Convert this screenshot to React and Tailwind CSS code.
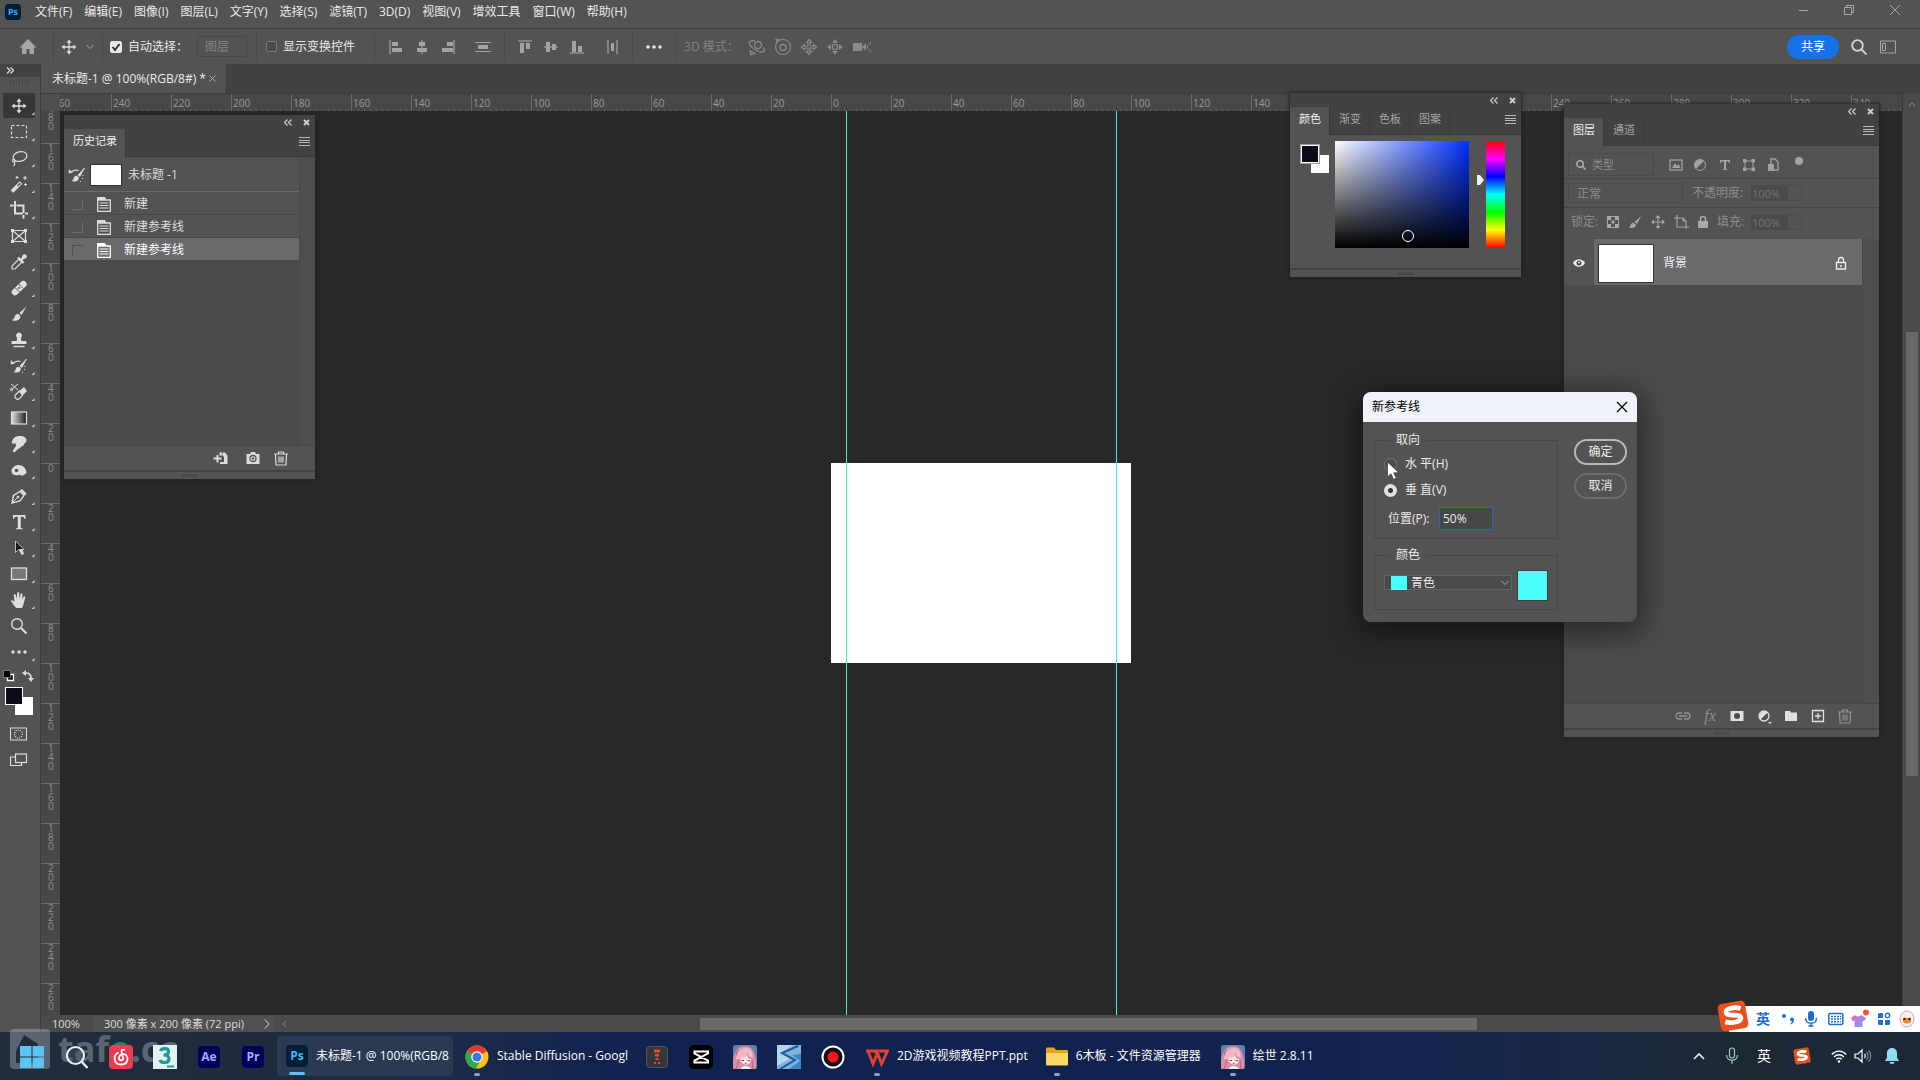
import React, { useState } from 'react';

const MENUS = ['文件(F)', '编辑(E)', '图像(I)', '图层(L)', '文字(Y)', '选择(S)', '滤镜(T)', '3D(D)', '视图(V)', '增效工具', '窗口(W)', '帮助(H)'];

const HISTORY = ['新建', '新建参考线', '新建参考线'];

// ruler cells run outwards from the middle of the document
const H_CELLS = Array.from({ length: 31 }, (_, i) => Math.abs((i - 13) * 20));
const V_CELLS = Array.from({ length: 23 }, (_, i) => Math.abs((i - 9) * 20));

function Svg({ w = 18, h = 18, className = '', children }) {
    return (
        <svg
            width={w}
            height={h}
            viewBox={`0 0 ${w} ${h}`}
            fill="none"
            stroke="none"
            className={`shrink-0 ${className}`}
            aria-hidden="true"
        >
            {children}
        </svg>
    );
}

const moveShape = (
    <>
        <path d="M9 4v10M4 9h10" stroke="currentColor" strokeWidth="1.3" />
        <path d="M9 1.5l2.6 3.2H6.4zM9 16.5l2.6-3.2H6.4zM1.5 9l3.2-2.6v5.2zM16.5 9l-3.2-2.6v5.2z" fill="currentColor" />
    </>
);

const brushShape = (
    <>
        <path d="M16.5 1.5L9.5 8l2 2 5-8.5z" fill="currentColor" />
        <path d="M9 9.2c-2-.8-3.8.2-4.3 2.2-.4 1.7-1.2 3-3 3.6 3.3 1.7 8.3 1 8.8-3.2z" fill="currentColor" />
    </>
);

const historyBrushShape = (
    <>
        <path d="M16.5 2L10 9l1.7 1.5L16.5 2z" fill="currentColor" stroke="currentColor" strokeWidth=".8" />
        <path d="M9.5 10c-2-.6-3.5.4-3.8 2.2-.2 1.2-1 2.3-2 2.8 3 1.2 6.8.4 7.3-3z" fill="currentColor" />
        <path d="M3 6.5c2-2.5 4.5-3 7.5-2" stroke="currentColor" strokeWidth="1.2" />
        <path d="M.8 7.5V3l4 3.5z" fill="currentColor" />
        <path d="M15 9v1M14.5 12v1M12.5 15v1" stroke="currentColor" />
    </>
);

const trashShape = (
    <path d="M2 5h14M6.5 5V3h5v2M3.5 5l.5 11h10l.5-11M7 7.5v6M9 7.5v6M11 7.5v6" stroke="currentColor" strokeWidth="1.2" />
);

const TOOLS = [
    { name: '移动工具', shape: moveShape, active: true },
    { name: '矩形选框工具', shape: <rect x="1.5" y="2.5" width="15" height="12" stroke="currentColor" strokeWidth="1.2" strokeDasharray="3 2" /> },
    {
        name: '套索工具',
        shape: (
            <>
                <ellipse cx="10" cy="7.5" rx="7" ry="4.8" transform="rotate(-14 10 7.5)" stroke="currentColor" strokeWidth="1.3" />
                <path d="M3.5 10c-1.5 1-1 3 .5 3s1.5-2 0-2.5M4 13c1 1.5 1 3-.5 4" stroke="currentColor" strokeWidth="1.2" />
            </>
        )
    },
    {
        name: '魔棒工具',
        shape: (
            <>
                <path d="M2 16.5l9-9" stroke="currentColor" strokeWidth="3.8" />
                <path d="M7.5 11l2.8-2.8" stroke="#535353" strokeWidth="1.4" />
                <path d="M7 1v3M5.5 2.500h3M15 1v4M13 3h4M15.5 8v3M14 9.5h3" stroke="currentColor" />
            </>
        )
    },
    { name: '裁剪工具', shape: <path d="M5 0v12.5h8M0 4.5h3.5M6.5 4.5h7V12M13.5 14v3.5M15 12.5h3" stroke="currentColor" strokeWidth="2" /> },
    {
        name: '图框工具',
        shape: (
            <>
                <path d="M2.5 3.5h13v11h-13zM2.5 3.5l13 11M15.5 3.5l-13 11" stroke="currentColor" strokeWidth="1.2" />
                <path d="M1 2h3v3H1zM14 2h3v3h-3zM1 13h3v3H1zM14 13h3v3h-3z" fill="currentColor" />
            </>
        )
    },
    {
        name: '吸管工具',
        shape: (
            <>
                <path d="M9 6l3 3-7 7H2v-3z" stroke="currentColor" strokeWidth="1.2" />
                <path d="M8 4.5l5.5 5.5M11 7l3.8-3.8" stroke="currentColor" strokeWidth="2.4" />
                <circle cx="14.5" cy="3.5" r="2.3" fill="currentColor" />
            </>
        )
    },
    {
        name: '污点修复画笔工具',
        shape: (
            <>
                <rect x="0" y="6" width="18" height="6.5" rx="3.2" transform="rotate(-43 9 9)" fill="currentColor" />
                <path d="M5 8.5l4.5 4.5M8.5 5l4.5 4.5" stroke="#535353" />
                <circle cx="9" cy="9" r="1" fill="#535353" />
            </>
        )
    },
    { name: '画笔工具', shape: brushShape },
    {
        name: '仿制图章工具',
        shape: (
            <>
                <path d="M9 1.5a3 3 0 0 1 2.5 4.5c-.8 1.2-.8 2.500 0 4H15c1 0 1.5.6 1.5 1.5V13h-15v-1.5c0-.9.5-1.5 1.5-1.5h3.5c.8-1.5.8-2.8 0-4A3 3 0 0 1 9 1.5z" fill="currentColor" />
                <path d="M3.5 15.500h11" stroke="currentColor" strokeWidth="1.5" />
            </>
        )
    },
    { name: '历史记录画笔工具', shape: historyBrushShape },
    {
        name: '橡皮擦工具',
        shape: (
            <>
                <path d="M9.5 8l4.5-4 3 4-4.500 4.500z" fill="currentColor" />
                <path d="M9.5 8l3 4.5-3 3c-1 .9-2.500.9-3.500 0-1.300-1-1.300-2.800-.4-3.800z" stroke="currentColor" strokeWidth="1.2" />
                <path d="M1 1l7 6M8 1L1.5 6.5" stroke="currentColor" />
                <circle cx="1.5" cy="6.5" r="1.3" stroke="currentColor" />
            </>
        )
    },
    {
        name: '渐变工具',
        shape: (
            <>
                <defs>
                    <linearGradient id="toolGradient">
                        <stop offset="0" stopColor="#e0e0e0" />
                        <stop offset="1" stopColor="#1c1c1c" />
                    </linearGradient>
                </defs>
                <rect x="1.5" y="3" width="15" height="12" fill="url(#toolGradient)" stroke="currentColor" strokeWidth="1.2" />
            </>
        )
    },
    { name: '涂抹工具', shape: <path d="M4 3c3-2.5 8-2.5 11-.5 2.5 1.7 1.5 5-.5 6l-1.500 2.500-2 .5-1 1.800-1.500.2-4 4-2-1.200 3.500-5.500-.5-2.500-2.500.5C1 8.500 2 5 4 3z" fill="currentColor" /> },
    {
        name: '加深工具',
        shape: (
            <>
                <path d="M1.5 9.500C2 6.500 5 4 8.500 4c4 0 8 3 8 8l-2 1.500c-1 1.500-3.500 1.500-4.500.2-3 1.300-9 .8-8.500-4.200z" fill="currentColor" />
                <circle cx="6.5" cy="9.5" r="1.8" fill="#535353" />
            </>
        )
    },
    {
        name: '钢笔工具',
        shape: (
            <>
                <path d="M2 16l1.500-7.500L10 4.500l4 4L10 14z" stroke="currentColor" strokeWidth="1.4" />
                <path d="M2 16l5.500-5.500" stroke="currentColor" />
                <circle cx="8" cy="10" r="1.3" fill="currentColor" />
                <path d="M10 3.500l2-1.500 4.500 4.500-1.500 2z" fill="currentColor" />
            </>
        )
    },
    { name: '文字工具', shape: <path d="M3 2h12.500v4h-1c-.3-1.600-.8-2.300-2.300-2.300h-1.500V14c0 1 .5 1.300 2 1.400v.8H5.800v-.8c1.500-.1 2-.4 2-1.400V3.700H6.300C4.800 3.700 4.300 4.400 4 6H3z" fill="currentColor" /> },
    {
        name: '路径选择工具',
        shape: (
            <>
                <path d="M11.5 8l2.500 7-2.500 1-2.500-5" fill="currentColor" />
                <path d="M5.5 2v11.500l3-3H14z" fill="#111" stroke="currentColor" strokeWidth=".8" />
            </>
        )
    },
    { name: '矩形工具', shape: <rect x="1.5" y="3" width="15" height="11.5" fill="#777" stroke="currentColor" strokeWidth="1.3" /> },
    { name: '抓手工具', shape: <path d="M6.500 17c-1.500-1-4.500-5.500-5.700-7 .5-1.200 1.800-1 3.700 1L3.800 4c.2-1.200 1.700-1.200 2 0l.8 4L7.200 2c.2-1.200 1.900-1.200 2 0l.4 6 1-5c.3-1.100 1.800-.9 1.900.2l-.4 5.600 1.400-3c.6-1 2-.5 1.800.6L13.500 13c-.3 2-.8 3-1.700 4z" fill="currentColor" /> },
    {
        name: '缩放工具',
        shape: (
            <>
                <circle cx="7" cy="7" r="5.3" stroke="currentColor" strokeWidth="1.4" />
                <path d="M11 11l5.500 5.500" stroke="currentColor" strokeWidth="2" />
            </>
        )
    },
    {
        name: '编辑工具栏',
        shape: (
            <>
                <circle cx="3" cy="9" r="1.7" fill="currentColor" />
                <circle cx="9" cy="9" r="1.7" fill="currentColor" />
                <circle cx="15" cy="9" r="1.7" fill="currentColor" />
            </>
        )
    }
];

function MenuBar() {
    return (
        <header className="flex h-[29px] shrink-0 items-center justify-between border-b border-[#3a3a3a] bg-[#535353] pl-[5px] text-xs text-[#eaeaea]">
            <div className="flex h-full items-center pb-1">
                <span className="flex h-4 w-4 items-center justify-center rounded-sm bg-[#001e36] text-[9px] font-bold text-[#31a8ff]">Ps</span>
                <nav className="ml-[14px] flex items-center gap-[12px]">
                    {MENUS.map(menu => (
                        <button key={menu} type="button" className="leading-4 whitespace-nowrap">{menu}</button>
                    ))}
                </nav>
            </div>
            <div className="flex items-center gap-[34px] pr-[19px] pb-2 text-[#a8a8a8]">
                <button type="button" aria-label="最小化">
                    <Svg w={12} h={12}><path d="M2 6.500h9" stroke="currentColor" /></Svg>
                </button>
                <button type="button" aria-label="还原">
                    <Svg w={12} h={12}><path d="M1.500 3.500h7v7h-7zM3.500 3.500v-2h7v7h-2" stroke="currentColor" /></Svg>
                </button>
                <button type="button" aria-label="关闭">
                    <Svg w={12} h={12}><path d="M1 1l10 10M11 1L1 11" stroke="currentColor" /></Svg>
                </button>
            </div>
        </header>
    );
}

function AlignButton({ label, d, line }) {
    return (
        <button type="button" aria-label={label}>
            <Svg w={14} h={14}>
                <path d={line} stroke="currentColor" strokeWidth="1.2" />
                <path d={d} fill="currentColor" />
            </Svg>
        </button>
    );
}

function OptionsBar() {
    const [autoSelect, setAutoSelect] = useState(true);
    const [showTransform, setShowTransform] = useState(false);

    return (
        <div className="flex h-[35px] shrink-0 items-center justify-between bg-[#535353] text-xs text-[#eaeaea]">
            <div className="flex h-full items-center">
                <button type="button" aria-label="主页" className="ml-[19px] text-[#a6a6a6]">
                    <Svg><path d="M9 1L.5 9.500H3V16h4.500v-5h3v5H15V9.500h2.500z" fill="currentColor" /></Svg>
                </button>
                <span className="ml-4 h-7 w-px bg-[#484848]" />
                <Svg className="ml-[6px] text-[#dcdcdc]">{moveShape}</Svg>
                <Svg w={8} h={8} className="ml-[8px] text-[#a8a8a8]"><path d="M.5 2L4 5.500 7.500 2" stroke="currentColor" /></Svg>
                <span className="ml-[8px] h-7 w-px bg-[#484848]" />
                <label className="ml-[7px] flex items-center gap-[6px]">
                    <span className="grid place-items-center">
                        <input
                            type="checkbox"
                            checked={autoSelect}
                            onChange={e => setAutoSelect(e.target.checked)}
                            className="col-start-1 row-start-1 h-3 w-3 appearance-none rounded-xs border border-[#8a8a8a] checked:border-[#e8e8e8] checked:bg-[#e8e8e8]"
                        />
                        {autoSelect && (
                            <Svg w={12} h={12} className="pointer-events-none col-start-1 row-start-1">
                                <path d="M2.500 6l2.500 3 4.500-6" stroke="#2a2a2a" strokeWidth="1.8" />
                            </Svg>
                        )}
                    </span>
                    自动选择：
                </label>
                <select aria-label="自动选择对象" disabled className="ml-[9px] h-[21px] w-[50px] appearance-none rounded-xs border border-[#484848] bg-transparent pl-[7px] leading-4 text-[#848484] opacity-100">
                    <option>图层</option>
                </select>
                <span className="ml-[9px] h-7 w-px bg-[#484848]" />
                <label className="ml-[9px] flex items-center gap-[6px]">
                    <input
                        type="checkbox"
                        checked={showTransform}
                        onChange={e => setShowTransform(e.target.checked)}
                        className="h-[11px] w-[11px] appearance-none rounded-xs border border-[#7a7a7a] bg-[#4a4a4a] checked:bg-[#e8e8e8]"
                    />
                    显示变换控件
                </label>
                <span className="ml-[19px] h-7 w-px bg-[#484848]" />
                <div className="ml-[14px] flex items-center gap-[12px] text-[#a2a2a2]">
                    <AlignButton label="左对齐" line="M1 0v14" d="M3 2h6v4H3zM3 8h10v4H3z" />
                    <AlignButton label="水平居中对齐" line="M7 0v14" d="M4 2h6v4H4zM2 8h10v4H2z" />
                    <AlignButton label="右对齐" line="M13 0v14" d="M6 2h6v4H6zM1 8h11v4H1z" />
                </div>
                <div className="ml-[20px] flex items-center text-[#a2a2a2]">
                    <Svg w={16} h={14}>
                        <path d="M0 2.500h16M0 11.500h16" stroke="currentColor" strokeWidth="1.2" />
                        <path d="M3 5h10v4H3z" fill="currentColor" />
                    </Svg>
                </div>
                <span className="ml-[13px] h-7 w-px bg-[#484848]" />
                <div className="ml-[13px] flex items-center gap-[12px] text-[#a2a2a2]">
                    <AlignButton label="顶对齐" line="M0 1h14" d="M2 3h4v10H2zM8 3h4v6H8z" />
                    <AlignButton label="垂直居中对齐" line="M0 7h14" d="M2 2h4v10H2zM8 4h4v6H8z" />
                    <AlignButton label="底对齐" line="M0 13h14" d="M2 1h4v11H2zM8 6h4v6H8z" />
                </div>
                <div className="ml-[22px] flex items-center text-[#a2a2a2]">
                    <AlignButton label="水平分布" line="M2 0v14M11 0v14" d="M5 3h3v8H5z" />
                </div>
                <span className="ml-[12px] h-7 w-px bg-[#484848]" />
                <button type="button" aria-label="更多" className="ml-[12px] text-[#e6e6e6]">
                    <Svg w={18} h={6}>
                        <circle cx="3" cy="3" r="1.8" fill="currentColor" />
                        <circle cx="9" cy="3" r="1.8" fill="currentColor" />
                        <circle cx="15" cy="3" r="1.8" fill="currentColor" />
                    </Svg>
                </button>
                <span className="ml-[12px] h-7 w-px bg-[#484848]" />
                <span className="ml-[8px] text-[#828282]">3D 模式：</span>
                <div className="ml-[9px] flex items-center gap-[8px] text-[#8a8a8a]">
                    <Svg>
                        <circle cx="10" cy="7" r="3.5" stroke="currentColor" strokeWidth="1.3" />
                        <path d="M7 3C3 2 0 4 2 7c1.500 2.500 5 5 9 6.500 5 1.500 7-1 4-4M2 13l5 2.500-4 1.500z" stroke="currentColor" strokeWidth="1.3" />
                    </Svg>
                    <Svg>
                        <circle cx="9" cy="9" r="7.5" stroke="currentColor" strokeWidth="1.2" />
                        <circle cx="9" cy="9.5" r="3" stroke="currentColor" strokeWidth="1.3" />
                        <path d="M1 1h5L3 5z" fill="currentColor" />
                    </Svg>
                    <Svg>
                        <path d="M9 1.500l2.500 3H10V8h3.500V6.500l3 2.500-3 2.500V10H10v3.500h1.500l-2.500 3-2.500-3H8V10H4.500v1.500L1.500 9l3-2.500V8H8V4.500H6.500z" stroke="currentColor" strokeWidth="1.2" />
                    </Svg>
                    <Svg>
                        <circle cx="9" cy="9" r="2.6" stroke="currentColor" strokeWidth="1.4" />
                        <path d="M9 1l3 4H6zM9 17l3-4H6zM1 9l4-3v6zM17 9l-4-3v6z" fill="currentColor" />
                    </Svg>
                    <Svg w={20}>
                        <path d="M1 5h9v8H1zM10 9l4-4v8z" fill="currentColor" />
                        <path d="M19 4l-4 5 4 5" stroke="currentColor" />
                    </Svg>
                </div>
            </div>
            <div className="flex items-center pr-[24px]">
                <button type="button" className="h-6 rounded-full bg-[#1473e6] px-[14px] leading-4 text-white">共享</button>
                <button type="button" aria-label="搜索" className="ml-[12px] text-[#d4d4d4]">
                    <Svg w={16} h={16}>
                        <circle cx="6.5" cy="6.5" r="5.3" stroke="currentColor" strokeWidth="1.8" />
                        <path d="M10.500 10.500l5 5" stroke="currentColor" strokeWidth="1.8" />
                    </Svg>
                </button>
                <button type="button" aria-label="工作区" className="ml-[13px] text-[#a6a6a6]">
                    <Svg w={16} h={14}><path d="M.5 1h15v12H.5zM2.500 3.500h3v7h-3z" stroke="currentColor" /></Svg>
                </button>
            </div>
        </div>
    );
}

function ToolBar() {
    return (
        <aside className="flex w-[41px] shrink-0 flex-col border-r border-[#3c3c3c] bg-[#535353] text-[#dedede]">
            <div className="flex h-[13px] items-center bg-[#424242] pl-[6px]">
                <Svg w={8} h={7}><path d="M1 .5l3 3-3 3M4.500 .5l3 3-3 3" stroke="currentColor" strokeWidth="1.3" /></Svg>
            </div>
            <div className="flex h-[16px] justify-center pt-[3px]">
                <span className="h-[6px] w-5 bg-[repeating-linear-gradient(90deg,#484848_0_1px,transparent_1px_3px)]" />
            </div>
            {TOOLS.map(tool => (
                <div key={tool.name} className="flex h-[26px] pl-[3px]">
                    <button
                        type="button"
                        aria-label={tool.name}
                        className={`flex h-[25px] w-[32px] items-center justify-center ${tool.active ? 'bg-[#373737]' : ''}`}
                    >
                        <Svg>{tool.shape}</Svg>
                    </button>
                    {/* flyout mark */}
                    <Svg w={4} h={22} className="-ml-1">{tool.name !== '缩放工具' && tool.name !== '图框工具' && <path d="M3.500 19v3h-3z" fill="#c8c8c8" />}</Svg>
                </div>
            ))}
            <div className="mt-[5px] flex items-center justify-between px-[3px] pr-[6px]">
                <Svg w={12} h={12}>
                    <path d="M4.500 4.500h6v6h-6z" fill="#111" stroke="#fff" strokeWidth="1.3" />
                    <path d="M.5 .5h7v7h-7z" fill="#000" stroke="#aaa" strokeWidth=".6" />
                </Svg>
                <Svg w={12} h={12}>
                    <path d="M3 3c4-.3 6 1.500 6 5.500" stroke="currentColor" strokeWidth="1.6" />
                    <path d="M0 3l4-3v6zM9 12l-3-4h6z" fill="currentColor" />
                </Svg>
            </div>
            <div className="mt-[5px] grid pl-[5px]">
                <span className="col-start-1 row-start-1 mt-[10px] ml-[10px] h-[18px] w-[18px] bg-white" />
                <button type="button" aria-label="前景色" className="col-start-1 row-start-1 h-[18px] w-[18px] border border-white bg-[#0d0d1a]" />
            </div>
            <div className="mt-[10px] flex flex-col items-start gap-[8px] pl-[10px]">
                <Svg>
                    <rect x=".5" y="3" width="16" height="12" stroke="currentColor" />
                    <circle cx="8.5" cy="9" r="4" stroke="currentColor" strokeWidth="1.2" strokeDasharray="1 1.2" />
                </Svg>
                <Svg>
                    <path d="M5.500 6H.5v8.500h11V12" stroke="currentColor" strokeWidth="1.2" />
                    <rect x="5.5" y="3" width="11" height="8.5" stroke="currentColor" strokeWidth="1.2" />
                </Svg>
            </div>
        </aside>
    );
}

function Rulers({ children }) {
    return (
        <div className="flex min-w-0 flex-1 flex-col">
            <div className="flex h-[18px] shrink-0 border-t border-[#3a3a3a] bg-[#474747] text-[10px] text-[#999]">
                <span className="w-[19px] shrink-0 bg-[#4e4e4e]" />
                <div className="flex min-w-0 flex-1 justify-center overflow-hidden">
                    {H_CELLS.map((n, i) => (
                        <span key={i} className="flex w-[60px] shrink-0 flex-col justify-between border-l border-[#6a6a6a] pl-px">
                            <span className="h-[13px] leading-[18px]">{n}</span>
                            <span className="h-[2px] bg-[repeating-linear-gradient(90deg,transparent_0_5px,#606060_5px_6px)]" />
                        </span>
                    ))}
                </div>
            </div>
            <div className="flex min-h-0 flex-1">
                <div className="flex w-[19px] shrink-0 flex-col items-stretch justify-center overflow-hidden bg-[#474747] text-[10px] text-[#8f8f8f]">
                    {V_CELLS.map((n, i) => (
                        <span key={i} className="h-[40px] w-full shrink-0 border-t border-[#6a6a6a] pl-[7px] leading-[9px]">
                            {String(n).split('').map((d, j) => (
                                <span key={j} className="block">{d}</span>
                            ))}
                        </span>
                    ))}
                </div>
                {children}
            </div>
        </div>
    );
}

function Canvas() {
    return (
        <main className="relative flex min-w-0 flex-1 items-center justify-center overflow-hidden bg-[#282828]">
            <div className="relative h-[200px] w-[300px] bg-white">
                <span className="absolute -inset-y-[1000px] left-[5%] w-px bg-[#4de8e0]" />
                <span className="absolute -inset-y-[1000px] left-[95%] w-px bg-[#4de8e0]" />
            </div>
        </main>
    );
}

function PanelHeader({ tabs, active }) {
    return (
        <>
            <div className="flex h-[14px] items-center justify-end gap-[11px] bg-[#424242] pr-[5px] text-[#cfcfcf]">
                <button type="button" aria-label="折叠面板"><Svg w={8} h={7}><path d="M3.500 .5l-3 3 3 3M7.500 .5l-3 3 3 3" stroke="currentColor" strokeWidth="1.2" /></Svg></button>
                <button type="button" aria-label="关闭面板"><Svg w={7} h={7}><path d="M1 1l5 5M6 1L1 6" stroke="currentColor" strokeWidth="1.8" /></Svg></button>
            </div>
            <div className="flex h-[28px] border-b border-[#3a3a3a] bg-[#424242] text-[11px]">
                {tabs.map(tab => (
                    <button
                        key={tab}
                        type="button"
                        className={`h-[28px] border-r border-[#3a3a3a] pr-[8px] pb-[4px] pl-[9px] leading-4 ${tab === active ? 'bg-[#535353] text-[#f0f0f0]' : 'text-[#a4a4a4]'}`}
                    >
                        {tab}
                    </button>
                ))}
                <button type="button" aria-label="面板菜单" className="mr-[5px] ml-auto pb-[2px] text-[#b8b8b8]">
                    <Svg w={11} h={9}><path d="M0 .5h11M0 3.500h11M0 5.500h11M0 8.500h11" stroke="currentColor" /></Svg>
                </button>
            </div>
        </>
    );
}

function PanelGrip() {
    return (
        <div className="flex h-[9px] shrink-0 items-center justify-center border-t-2 border-[#424242] bg-[#535353]">
            <span className="h-[3px] w-4 bg-[#4a4a4a]" />
        </div>
    );
}

function HistoryPanel() {
    return (
        <section aria-label="历史记录" className="absolute top-[51px] left-[64px] flex h-[364px] w-[251px] flex-col bg-[#535353] text-xs text-[#dcdcdc] shadow-[0_0_3px_1px_#222]">
            <PanelHeader tabs={['历史记录']} active="历史记录" />
            <div className="flex min-h-0 flex-1 bg-[#4b4b4b]">
                <ul className="flex-1">
                    <li className="flex h-[35px] items-center border-b border-[#6a6a6a] bg-[#535353] pt-[2px] pl-[4px]">
                        <Svg>{historyBrushShape}</Svg>
                        <span className="ml-[4px] h-[22px] w-[32px] border border-[#333] bg-white" />
                        <span className="ml-[6px]">未标题 -1</span>
                    </li>
                    {HISTORY.map((item, i) => (
                        <li
                            key={i}
                            className={`flex h-[23px] items-center border-b border-[#484848] pt-[2px] pl-[8px] ${i === 2 ? 'bg-[#6a6a6a] text-white' : 'bg-[#535353]'}`}
                        >
                            <span className={`h-[11px] w-[11px] border-[#6c6c6c] ${i === 2 ? 'border-t border-l border-[#505050]' : 'border-r border-b'}`} />
                            <Svg w={14} h={16} className="ml-[14px]">
                                <path d="M.7 4h12.600v11.300H.7z" stroke="currentColor" strokeWidth="1.3" />
                                <path d="M0 1h8l1.500 3H0z" fill="currentColor" />
                                <path d="M2.500 7h9M2.500 9.500h9M2.500 12h9" stroke="currentColor" strokeWidth="1.2" />
                            </Svg>
                            <span className="ml-[13px]">{item}</span>
                        </li>
                    ))}
                </ul>
                <span className="w-[16px] border-l border-[#484848] bg-[#4e4e4e]" />
            </div>
            <div className="flex h-[25px] items-center justify-end gap-[14px] border-t border-[#454545] pr-[25px]">
                <button type="button" aria-label="从当前状态创建新文档">
                    <Svg>
                        <path d="M7.500 3.500h3v3h-3zM11 3.500h2l2.500 3V15H8v-2h4V7.500h-1z" fill="currentColor" />
                        <path d="M1.500 9.500h8M5.500 6v7.500" stroke="currentColor" strokeWidth="2" />
                    </Svg>
                </button>
                <button type="button" aria-label="创建新快照">
                    <Svg>
                        <path d="M2.500 5H6l1-2h4l1 2h3.500v10h-13z" fill="currentColor" />
                        <circle cx="9" cy="9.5" r="3" fill="#eee" stroke="#535353" strokeWidth="1.3" />
                        <circle cx="9" cy="9.5" r="1.3" fill="#535353" />
                    </Svg>
                </button>
                <button type="button" aria-label="删除当前状态" className="-ml-1"><Svg>{trashShape}</Svg></button>
            </div>
            <PanelGrip />
        </section>
    );
}

function ColorPanel() {
    return (
        <section aria-label="颜色" className="absolute top-[29px] right-[399px] flex w-[231px] flex-col bg-[#535353] shadow-[0_0_3px_1px_#222]">
            <PanelHeader tabs={['颜色', '渐变', '色板', '图案']} active="颜色" />
            <div className="flex h-[133px] pt-[6px] pl-[10px]">
                <div className="mt-[3px] grid h-[29px] w-[29px]">
                    <span className="col-start-1 row-start-1 mt-[11px] ml-[11px] bg-white" />
                    <button type="button" aria-label="前景色" className="col-start-1 row-start-1 m-px h-[18px] w-[18px] border border-white bg-[#0d0d1a] outline outline-[#999]" />
                </div>
                <div className="relative ml-[6px] h-[107px] w-[134px] bg-[linear-gradient(to_top,#000,transparent),linear-gradient(to_right,#fff,#0030ff)]">
                    <span className="absolute bottom-[6px] left-[67px] h-[12px] w-[12px] rounded-full border border-white" />
                </div>
                <Svg w={8} h={12} className="mt-[33px] ml-[7px]"><path d="M1 1h3l4 5-4 5H1z" fill="#f0f0f0" /></Svg>
                <div className="ml-[2px] h-[107px] w-[19px] bg-[linear-gradient(to_bottom,#f00,#f0f,#00f,#0ff,#0f0,#ff0,#f00)]" />
            </div>
            <PanelGrip />
        </section>
    );
}

function LayersPanel() {
    return (
        <section aria-label="图层" className="absolute top-[40px] right-[41px] flex h-[633px] w-[315px] flex-col bg-[#535353] text-xs text-[#8d8d8d] shadow-[0_0_3px_1px_#222]">
            <PanelHeader tabs={['图层', '通道']} active="图层" />
            <div className="flex h-[33px] items-center border-b border-[#454545] pt-[5px] pl-1">
                <label className="flex h-[23px] w-[86px] items-center gap-[6px] border border-[#4a4a4a] px-[7px]">
                    <Svg w={10} h={10} className="text-[#b0b0b0]">
                        <circle cx="4" cy="4" r="3.2" stroke="currentColor" strokeWidth="1.4" />
                        <path d="M6.500 6.500L9.500 9.500" stroke="currentColor" strokeWidth="1.6" />
                    </Svg>
                    <select aria-label="图层筛选类型" disabled className="w-full appearance-none bg-transparent text-[11px] leading-4 opacity-100">
                        <option>类型</option>
                    </select>
                </label>
                <div className="ml-[15px] flex items-center gap-[10px] text-[#a2a2a2]">
                    <Svg w={14} h={14}>
                        <rect x="1" y="2" width="12" height="10" stroke="currentColor" strokeWidth="1.3" />
                        <path d="M3 10l3-5 2 3 1.500-2L11.500 10z" fill="currentColor" />
                    </Svg>
                    <Svg w={14} h={14}>
                        <circle cx="7" cy="7" r="5.5" stroke="currentColor" />
                        <path d="M3 11A5.500 5.500 0 0 1 11 3z" fill="currentColor" />
                    </Svg>
                    <Svg w={15} h={14}><path d="M3 2h10v3h-1c-.2-1-.6-1.400-1.500-1.400H9V10c0 1 .3 1.200 1.300 1.300v.7H5.700v-.7C6.700 11.200 7 11 7 10V3.600H5.500C4.600 3.600 4.200 4 4 5H3z" fill="currentColor" /></Svg>
                    <Svg w={14} h={14}>
                        <path d="M3 3h8v8H3z" stroke="currentColor" />
                        <path d="M1 1h3.500v3.500H1zM9.500 1H13v3.500H9.500zM1 9.500h3.500V13H1zM9.500 9.500H13V13H9.500z" fill="currentColor" />
                    </Svg>
                    <Svg w={14} h={14}>
                        <path d="M5 6V1h4l3 3v8H8" stroke="currentColor" strokeWidth="1.4" />
                        <path d="M2 6h6v7H2z" fill="currentColor" />
                    </Svg>
                    <Svg w={14} h={20} className="ml-[2px]"><circle cx="7" cy="6" r="4" fill="currentColor" /></Svg>
                </div>
            </div>
            <div className="flex h-[29px] items-center border-b border-[#454545] pl-1">
                <select aria-label="混合模式" disabled className="h-5 w-[115px] appearance-none border border-[#4a4a4a] bg-transparent pt-px pl-[8px] leading-4 opacity-100">
                    <option>正常</option>
                </select>
                <label className="ml-[9px] flex items-center gap-[5px] text-[11px]">
                    <span className="w-[54px] text-xs whitespace-nowrap">不透明度:</span>
                    <input defaultValue="100%" disabled className="h-[16px] w-[36px] bg-[#4a4a4a] pl-px text-[#747474]" />
                    <span className="-ml-[5px] h-4 w-[15px] border border-[#4b4b4b]" />
                </label>
            </div>
            <div className="flex h-[31px] items-center pb-[3px] pl-[7px]">
                <span className="w-[35px]">锁定:</span>
                <div className="flex items-center gap-[8px] text-[#a8a8a8]">
                    <Svg w={14} h={14}>
                        <path d="M1.500 1.500h11v11h-11z" stroke="currentColor" />
                        <path d="M2 2h3v3H2zM9 2h3v3H9zM5.500 5.500h3v3h-3zM2 9h3v3H2zM9 9h3v3H9z" fill="currentColor" />
                    </Svg>
                    <Svg w={14} h={14}>
                        <path d="M13 1L6.500 7 9 9zM6 8c-3-1-3 3-5 4.500 3 1 7 .5 7-2.500z" fill="currentColor" />
                    </Svg>
                    <Svg w={16} h={14}>
                        <path d="M8 2v10M3 7h10" stroke="currentColor" />
                        <path d="M8 0l2.500 3h-5zM8 14l2.500-3h-5zM1 7l3-2.500v5zM15 7l-3-2.500v5z" fill="currentColor" />
                    </Svg>
                    <Svg w={15} h={14}><path d="M3 0v12h12M0 3h9l3 3v8M9 3v3h3" stroke="currentColor" strokeWidth="1.1" /></Svg>
                    <Svg w={12} h={14}>
                        <path d="M3.500 6V4a2.500 2.500 0 0 1 5 0v2" stroke="currentColor" strokeWidth="1.5" />
                        <path d="M1 6h10v7H1z" fill="currentColor" />
                    </Svg>
                </div>
                <label className="ml-[8px] flex items-center text-[11px]">
                    <span className="w-[34px] text-xs">填充:</span>
                    <input defaultValue="100%" disabled className="h-[15px] w-[36px] bg-[#4a4a4a] pl-px text-[#747474]" />
                    <span className="h-4 w-[15px] border border-[#4b4b4b]" />
                </label>
            </div>
            <div className="flex min-h-0 flex-1 bg-[#4b4b4b]">
                <div className="flex-1">
                    <div className="flex h-[46px] items-center bg-[#535353] text-[#f0f0f0]">
                        <button type="button" aria-label="显示图层" className="flex w-[30px] justify-center pt-px">
                            <Svg w={14} h={10}>
                                <path d="M1 5c3-5 9-5 12 0-3 5-9 5-12 0z" fill="currentColor" />
                                <circle cx="7" cy="5" r="2.5" fill="#444" />
                                <circle cx="7" cy="4.5" r="1" fill="currentColor" />
                            </Svg>
                        </button>
                        <div className="flex h-full flex-1 items-center bg-[#6a6a6a] pt-[2px] pr-[15px] pl-[4px]">
                            <span className="h-[39px] w-[56px] border border-[#333] bg-white" />
                            <span className="ml-[9px]">背景</span>
                            <Svg w={12} h={14} className="ml-auto">
                                <path d="M1.500 6.500h9v6.500h-9zM3.500 6V4a2.500 2.500 0 0 1 5 0v2" stroke="currentColor" strokeWidth="1.3" />
                                <path d="M5.300 9h1.500v2H5.300z" fill="currentColor" />
                            </Svg>
                        </div>
                    </div>
                </div>
                <span className="w-[17px] border-l border-[#474747] bg-[#4e4e4e]" />
            </div>
            <div className="flex h-[25px] items-center justify-end gap-[9px] border-t border-[#454545] pr-[25px] text-[#e0e0e0]">
                <Svg className="text-[#919191]">
                    <path d="M8 6H5a3 3 0 0 0 0 6h3M10 6h3a3 3 0 0 1 0 6h-3M5 9h8" stroke="currentColor" strokeWidth="1.3" />
                </Svg>
                <span className="w-[18px] text-center font-['Liberation_Serif',serif] text-base leading-4 text-[#919191] italic">fx</span>
                <Svg>
                    <path d="M2.500 4h13v10h-13z" fill="currentColor" />
                    <circle cx="9" cy="9" r="3" fill="#4a4a4a" />
                </Svg>
                <Svg>
                    <circle cx="9" cy="9" r="5" stroke="currentColor" strokeWidth="1.3" />
                    <path d="M5.500 12.500A5 5 0 0 1 12.500 5.500z" fill="currentColor" />
                    <path d="M13 15h4l-2 2z" fill="currentColor" />
                </Svg>
                <Svg><path d="M3 4h5l1 1.500h6V14H3z" fill="currentColor" /></Svg>
                <Svg><path d="M3.500 3.500h11v11h-11zM9 6v6M6 9h6" stroke="currentColor" strokeWidth="1.3" /></Svg>
                <Svg className="text-[#919191]">{trashShape}</Svg>
            </div>
            <PanelGrip />
        </section>
    );
}

function GuideDialog() {
    const [orientation, setOrientation] = useState('v');
    const [position, setPosition] = useState('50%');

    const radioClass = 'h-[13px] w-[13px] appearance-none rounded-full border border-[#777] bg-[#4a4a4a] checked:border-4 checked:border-[#e2e2e2] checked:bg-[#333]';

    return (
        <div role="dialog" aria-label="新参考线" className="absolute top-[328px] right-[283px] w-[274px] rounded-lg bg-[#535353] text-xs text-[#ececec] shadow-[0_6px_30px_6px_rgba(0,0,0,0.45)]">
            <div className="flex h-[30px] items-center justify-between rounded-t-lg bg-[#f0f3f9] px-[9px] pb-px text-black">
                <span>新参考线</span>
                <button type="button" aria-label="关闭"><Svg w={12} h={12}><path d="M1 1l10 10M11 1L1 11" stroke="currentColor" strokeWidth="1.2" /></Svg></button>
            </div>
            <div className="flex h-[200px] pt-[10px] pl-[11px]">
                <div className="w-[184px]">
                    <fieldset className="h-[107px] border border-[#474747] px-[9px]">
                        <legend className="ml-[6px] px-[6px] leading-4">取向</legend>
                        <label className="mt-[8px] flex h-4 items-center gap-[8px]">
                            <input type="radio" name="orientation" checked={orientation === 'h'} onChange={() => setOrientation('h')} className={radioClass} />
                            水 平(H)
                        </label>
                        <label className="mt-[10px] flex h-4 items-center gap-[8px]">
                            <input type="radio" name="orientation" checked={orientation === 'v'} onChange={() => setOrientation('v')} className={radioClass} />
                            垂 直(V)
                        </label>
                        <label className="mt-[9px] flex items-center pl-[4px]">
                            <span className="w-[51px]">位置(P):</span>
                            <input
                                value={position}
                                onChange={e => setPosition(e.target.value)}
                                className="h-[23px] w-[54px] border border-[#2d66b0] bg-[#464646] pl-[3px] outline-none"
                            />
                        </label>
                    </fieldset>
                    <fieldset className="mt-[8px] flex h-[63px] border border-[#474747] pl-[9px]">
                        <legend className="ml-[6px] px-[6px] leading-4">颜色</legend>
                        <div className="mt-[7px] flex w-full gap-[5px]">
                            <div className="mt-[5px] grid h-[15px] w-[128px] items-center">
                                <select aria-label="颜色" className="col-start-1 row-start-1 h-[15px] w-full appearance-none border border-[#626262] bg-[#4a4a4a] pl-[26px] leading-3">
                                    <option>青色</option>
                                </select>
                                <span className="pointer-events-none col-start-1 row-start-1 ml-[7px] h-[14px] w-[16px] bg-[#4dffff]" />
                                <Svg w={8} h={8} className="pointer-events-none col-start-1 row-start-1 mr-[3px] justify-self-end text-[#aaa]"><path d="M.5 2L4 5.500 7.500 2" stroke="currentColor" /></Svg>
                            </div>
                            <span className="h-[31px] w-[31px] border border-[#3f3f3f] bg-[#4dffff]" />
                        </div>
                    </fieldset>
                </div>
                <div className="ml-[16px] flex flex-col gap-[8px] pt-[7px]">
                    <button type="button" className="h-[26px] w-[53px] rounded-full border-2 border-[#b8b8b8] leading-4">确定</button>
                    <button type="button" className="h-[26px] w-[53px] rounded-full border-2 border-[#6c6c6c] leading-4">取消</button>
                </div>
            </div>
            {/* mouse pointer */}
            <Svg w={14} h={20} className="absolute top-[69px] left-[23px]"><path d="M1.500 1v15l3.500-3.200 2.500 5.700 2.800-1.200-2.500-5.500H13z" fill="#fff" stroke="#333" strokeWidth=".7" /></Svg>
        </div>
    );
}

function StatusBar() {
    return (
        <footer className="flex h-[17px] shrink-0 items-center bg-[#4a4a4a] text-[11px] text-[#dedede]">
            <span className="w-[52px] pl-[11px] leading-4">100%</span>
            <span className="flex h-full w-[181px] items-center justify-between bg-[#505050] pr-[4px] pl-[11px] leading-4 whitespace-nowrap">
                300 像素 x 200 像素 (72 ppi)
                <Svg w={6} h={10}><path d="M1 .5l4 4.500-4 4.500" stroke="currentColor" /></Svg>
            </span>
            <Svg w={6} h={8} className="ml-[8px]"><path d="M4 1L1 4l3 3" stroke="#888" /></Svg>
            <div className="flex flex-1 pl-[412px] pr-[443px]">
                <span className="h-[12px] flex-1 bg-[#6a6a6a]" />
            </div>
        </footer>
    );
}

function SogouLogo({ w = 30, className }) {
    return (
        <svg width={w} height={w} viewBox="0 0 30 30" className={`shrink-0 ${className}`} aria-hidden="true">
            <rect x="2" y="2" width="26" height="26" rx="4" transform="rotate(-10 15 15)" fill="#e8501f" />
            <path d="M23 9c-5-2.500-14-2-14 1.800 0 4.700 13 2.200 13 6.700 0 4-9 4.500-15 2" transform="rotate(-8 15 15)" fill="none" stroke="#fff" strokeWidth="4.5" />
        </svg>
    );
}

function ImeBar() {
    return (
        <div className="absolute right-0 bottom-[48px] flex h-[26px] items-center bg-white pr-[4px] text-[#1a6fd0]">
            <SogouLogo w={32} className="-mt-[6px] -ml-[12px]" />
            <span className="ml-[7px] text-sm leading-4 font-bold">英</span>
            <Svg w={12} h={14} className="ml-[12px]">
                <circle cx="2" cy="4" r="2" fill="currentColor" />
                <path d="M8 7.500a2 2 0 0 1 4 0c0 2.500-1.300 4-3 5l-.5-1C9.500 11 10 10.200 10 9.600a2 2 0 0 1-2-2z" fill="currentColor" />
            </Svg>
            <Svg w={14} h={16} className="ml-[10px]">
                <rect x="4" y="0" width="6" height="10" rx="3" fill="currentColor" />
                <path d="M1.500 7c0 7 11 7 11 0M7 12v4M4.500 15h5" stroke="currentColor" strokeWidth="1.5" />
            </Svg>
            <Svg w={16} h={14} className="ml-[10px]">
                <rect x=".8" y="1.5" width="14" height="11" rx="1.5" stroke="currentColor" strokeWidth="1.5" />
                <path d="M3 4.500h10M3 7h10M3 9.800h10" stroke="currentColor" strokeWidth="1.5" strokeDasharray="2 1" />
            </Svg>
            <Svg w={20} h={20} className="ml-[6px]">
                <defs>
                    <linearGradient id="shirt" x1="0" y1="0" x2="1" y2="1">
                        <stop offset="0" stopColor="#f0609a" />
                        <stop offset=".6" stopColor="#a08af0" />
                        <stop offset="1" stopColor="#58b8f8" />
                    </linearGradient>
                </defs>
                <path d="M5 6c2 2 4 2 6 0l5 3-2 3.500-1.500-1V18h-8v-6.500L3 12.500 1 9z" fill="url(#shirt)" />
                <circle cx="16" cy="3.5" r="3" fill="#f0543c" />
            </Svg>
            <Svg w={14} h={14} className="ml-[7px]">
                <path d="M2 1h4v5H1V2zM1 8h5v5H2l-1-1zM8 8h5v4l-1 1H8z" fill="currentColor" />
                <circle cx="10.5" cy="3.5" r="2.2" stroke="currentColor" strokeWidth="1.4" />
            </Svg>
            <Svg w={18} h={18} className="ml-[7px]">
                <ellipse cx="9" cy="9" rx="7" ry="8" fill="#fff2e8" stroke="#d9a0b8" />
                <path d="M5 8h8v4c-2 2-6 2-8 0z" fill="#f08a30" />
                <circle cx="6.5" cy="9" r="1.3" fill="#4a2a18" />
                <circle cx="11.5" cy="9" r="1.3" fill="#4a2a18" />
            </Svg>
        </div>
    );
}

function AnimeIcon() {
    return (
        <Svg w={24} h={24}>
            <rect width="24" height="24" rx="3" fill="#5f7fae" />
            <path d="M0 24C-1 12 2 1 12 1c9 0 12 10 11 23z" fill="#d98fa6" />
            <path d="M3 14c1-8 5-11 10-11s7 4 7 10c-3 0-5-3-6-5-2 5-6 6-11 6z" fill="#f0b9c8" />
            <path d="M7 13c0 8 11 9 11 1-2 0-4-2-4-4-2 2-4 3-7 3z" fill="#fbe4de" />
            <path d="M8.500 15.500h2.500M14.500 15.500H17M12 18.500h1.500" stroke="#a03a55" />
            <path d="M3 24l3-9M20 24l-1-9M5 5l-2 5" stroke="#b86480" />
            <path d="M8 24c0-4 9-4 10 0z" fill="#eef0f8" />
        </Svg>
    );
}

function TaskButton({ label, dot, children, icon, className = '' }) {
    return (
        <button type="button" aria-label={label || children} className={`flex h-full shrink-0 items-center gap-[8px] ${className}`}>
            <span className="flex h-full flex-col items-center pt-[13px]">
                <span className="flex h-6 items-center">{icon}</span>
                {dot && <span className="mt-[4px] h-[3px] w-[6px] rounded-full bg-[#8ea2c4]" />}
            </span>
            {children && <span className="leading-5 whitespace-nowrap">{children}</span>}
        </button>
    );
}

function TaskBar() {
    return (
        <div className="relative flex h-12 shrink-0 items-center justify-between bg-[linear-gradient(90deg,#1f2d3c_0%,#1e2b3c_14%,#1c2a49_24%,#10224f_32%,#11224f_68%,#16254a_78%,#1c2935_90%,#1b2835_100%)] text-xs text-white">
            {/* studio watermark */}
            <div className="absolute -top-[3px] left-[10px] flex items-center gap-[8px] text-[#b4bac0] opacity-40">
                <Svg w={40} h={40}><path fillRule="evenodd" d="M4 0h32a4 4 0 0 1 4 4v32a4 4 0 0 1-4 4H4a4 4 0 0 1-4-4V4a4 4 0 0 1 4-4zM6 22L14 6l14 9v19H6z" fill="currentColor" /></Svg>
                <span className="text-[36px] leading-[32px] font-bold">tafe.cc</span>
            </div>
            <div className="relative flex h-full items-center">
                <TaskButton
                    label="开始"
                    className="ml-[20px]"
                    icon={
                        <Svg w={24} h={24}>
                            <path d="M0 1h11.500v10.500H0zM12.500 1H24v10.500H12.500zM0 12.500h11.500V23H0zM12.500 12.500H24V23H12.500z" fill="#5cc4f5" />
                        </Svg>
                    }
                />
                <TaskButton
                    label="搜索"
                    className="ml-[22px]"
                    icon={
                        <Svg w={22} h={24}>
                            <circle cx="9.5" cy="10.5" r="8.5" stroke="#e8edf2" strokeWidth="2.2" fill="#4a5866" fillOpacity=".4" />
                            <path d="M16 17l5.500 6" stroke="#e8edf2" strokeWidth="2.4" />
                        </Svg>
                    }
                />
                <TaskButton
                    label="网易云音乐"
                    className="ml-[21px]"
                    icon={
                        <Svg w={24} h={24}>
                            <rect width="24" height="24" rx="4" fill="#f03a50" />
                            <path d="M16 5c-2-1-4 0-3.500 2l1.500 5.500c.8 4-4.500 3.500-4 .2C10.500 10 13 9 15 9.200c5 .8 5 10-2.500 10.300-8 .3-9-9.500-3-12" stroke="#fff" strokeWidth="1.8" />
                        </Svg>
                    }
                />
                <TaskButton
                    label="3ds Max"
                    className="ml-[20px]"
                    icon={
                        <Svg w={24} h={24}>
                            <rect width="24" height="24" fill="#e4f1f2" />
                            <path d="M7.500 6c1-3 8-3.500 8 .5 0 3-3 3.500-5 3.500 3 0 5.500.8 5.500 4 0 4.500-8 4.500-9 1" stroke="#1f9a94" strokeWidth="3.2" />
                            <path d="M14 21.500h7" stroke="#1f9a94" strokeWidth="2" />
                        </Svg>
                    }
                />
                <TaskButton label="After Effects" className="ml-[21px]" icon={<span className="flex h-[22px] w-[22px] items-center justify-center rounded bg-[#00005b] font-bold text-[#b3a7ff]">Ae</span>} />
                <TaskButton label="Premiere Pro" className="ml-[22px]" icon={<span className="flex h-[22px] w-[22px] items-center justify-center rounded bg-[#00005b] font-bold text-[#b3a7ff]">Pr</span>} />
                <div className="ml-[13px] flex h-[40px] w-[176px] items-center overflow-hidden rounded bg-[#2a3a52] pl-[9px]">
                    <span className="flex h-full flex-col items-center pt-[9px]">
                        <span className="flex h-[22px] w-[22px] items-center justify-center rounded bg-[#001e36] font-bold text-[#4db4f5]">Ps</span>
                        <span className="mt-[5px] h-[3px] w-[16px] rounded-full bg-[#60c0f4]" />
                    </span>
                    <span className="ml-[8px] leading-5 whitespace-nowrap">未标题-1 @ 100%(RGB/8</span>
                </div>
                <div className="ml-[12px] flex h-full w-[171px]">
                    <TaskButton
                        dot
                        icon={
                            <Svg w={24} h={24}>
                                <circle cx="12" cy="12" r="11.5" fill="#fbc116" />
                                <path d="M12 12L2 6.300A11.500 11.500 0 0 1 22 6.300z" fill="#e33b2e" />
                                <path d="M2 6.300A11.500 11.500 0 0 0 11 23.500L15.500 15 12 12z" fill="#2da94f" />
                                <circle cx="12" cy="12" r="5.8" fill="#fff" />
                                <circle cx="12" cy="12" r="4.5" fill="#3b78e7" />
                            </Svg>
                        }
                    >
                        Stable Diffusion - Googl
                    </TaskButton>
                </div>
                <TaskButton
                    label="工具"
                    className="ml-[10px]"
                    icon={
                        <Svg w={22} h={24}>
                            <rect x=".5" y="1.5" width="21" height="21" rx="3" fill="#33373c" stroke="#565656" />
                            <path d="M8 4.500h6v3H8zM9 9h4v2.500H9zM9.500 13h3v2h-3zM8 17h2v2H8zM12 17h2v2h-2z" fill="#e8492c" />
                        </Svg>
                    }
                />
                <TaskButton
                    label="剪映"
                    className="ml-[21px]"
                    icon={
                        <Svg w={24} h={24}>
                            <rect width="24" height="24" rx="5" fill="#000" />
                            <path d="M19 8.500V6.500H5.500v2l13.500 7v2H5.500v-2L19 8.500z" stroke="#fff" strokeWidth="2" />
                        </Svg>
                    }
                />
                <TaskButton label="绘世启动器" className="ml-[20px]" icon={<AnimeIcon />} />
                <TaskButton
                    label="流程"
                    className="ml-[20px]"
                    icon={
                        <Svg w={24} h={24}>
                            <rect width="24" height="24" fill="#7fb4e0" />
                            <path d="M0 0h16L5 7l9 6-14 8z" fill="#b4d6f0" />
                            <path d="M24 9l-9 1 8 6-11 8h12z" fill="#3c86c8" />
                            <path d="M21 1L5 8l13 7L3 24" stroke="#1d5c98" strokeWidth="2" />
                        </Svg>
                    }
                />
                <TaskButton
                    label="录屏"
                    className="ml-[20px]"
                    icon={
                        <Svg w={24} h={24}>
                            <circle cx="12" cy="12" r="10.5" fill="#111" stroke="#fff" strokeWidth="2" />
                            <circle cx="12" cy="12" r="5.5" fill="#f01818" />
                        </Svg>
                    }
                />
                <TaskButton
                    dot
                    className="ml-[20px]"
                    icon={
                        <Svg w={24} h={24}>
                            <path d="M1 6h11l-1.500 3M3 6l5 13 4.500-11 4 11L22.500 6H14" stroke="#e8402c" strokeWidth="2.8" />
                        </Svg>
                    }
                >
                    2D游戏视频教程PPT.ppt
                </TaskButton>
                <TaskButton
                    dot
                    className="ml-[18px]"
                    icon={
                        <Svg w={22} h={24}>
                            <path d="M0 4c0-1 .5-1.500 1.500-1.500H8l2 2.500h10.500c1 0 1.500.5 1.500 1.500V19H0z" fill="#e8a420" />
                            <path d="M0 8h22v11c0 1-.5 1.500-1.500 1.500h-19C.5 20.500 0 20 0 19z" fill="#ffd668" />
                        </Svg>
                    }
                >
                    6木板 - 文件资源管理器
                </TaskButton>
                <TaskButton dot className="ml-[20px]" icon={<AnimeIcon />}>绘世 2.8.11</TaskButton>
            </div>
            <div className="flex items-center pr-[20px]">
                <Svg w={12} h={8}><path d="M1 7l5-5 5 5" stroke="#e8edf2" strokeWidth="1.6" /></Svg>
                <Svg w={14} h={18} className="ml-[20px]">
                    <rect x="4.5" y="1" width="5" height="10" rx="2.5" stroke="#9cc8c8" strokeWidth="1.2" />
                    <path d="M1.500 8c0 7 11 7 11 0M7 13.500V17" stroke="#9cc8c8" strokeWidth="1.2" />
                </Svg>
                <span className="ml-[18px] text-sm leading-4">英</span>
                <SogouLogo w={18} className="ml-[22px]" />
                <Svg w={16} h={16} className="ml-[20px]">
                    <path d="M.8 6.500c4-4.500 10.400-4.500 14.400 0M3 9c3-3 7-3 10 0M5.200 11.300c1.700-1.500 3.900-1.500 5.600 0" stroke="#fff" strokeWidth="1.3" />
                    <circle cx="8" cy="13.5" r="1.2" fill="#fff" />
                </Svg>
                <Svg w={18} h={16} className="ml-[7px]">
                    <path d="M1 6h3l4-4v12l-4-4H1zM10.500 6c1 1 1 3 0 4" stroke="#fff" strokeWidth="1.2" />
                    <path d="M12.500 4c2 2 2 6 0 8M14.500 2.500c3 3 3 8 0 11" stroke="#8090a0" strokeWidth="1.1" />
                </Svg>
                <Svg w={16} h={18} className="ml-[12px]">
                    <path d="M8 1c3 0 5 2.200 5 5v4.500l2 3.500H1l2-3.500V6c0-2.800 2-5 5-5zM5.500 15h5a2.500 2 0 0 1-5 0z" fill="#8fdcf6" />
                </Svg>
            </div>
        </div>
    );
}

function App() {
    return (
        <div className="relative flex h-screen flex-col overflow-hidden bg-[#424242] font-['Open_Sans','Noto_Sans_CJK_SC',sans-serif]">
            <MenuBar />
            <OptionsBar />
            <div className="relative flex min-h-0 flex-1">
                <ToolBar />
                <div className="flex min-w-0 flex-1 flex-col">
                    <div className="flex h-[29px] shrink-0 bg-[#424242]">
                        <div className="flex w-[186px] items-center justify-between border-r border-[#3a3a3a] bg-[#535353] pr-[10px] pl-[11px] text-xs text-[#ececec]">
                            <span className="leading-4 whitespace-nowrap">未标题-1 @ 100%(RGB/8#) *</span>
                            <button type="button" aria-label="关闭文档"><Svg w={7} h={7}><path d="M.5 .5l6 6M6.500 .5l-6 6" stroke="#b0b0b0" /></Svg></button>
                        </div>
                    </div>
                    <div className="flex min-h-0 flex-1">
                        <Rulers>
                            <Canvas />
                        </Rulers>
                        <div className="flex w-[18px] shrink-0 flex-col items-center border-l border-[#3a3a3a] bg-[#4a4a4a]">
                            <Svg w={8} h={8} className="mt-[7px]"><path d="M1 6l3-3 3 3" stroke="#888" /></Svg>
                            <span className="mt-[224px] h-[444px] w-[12px] bg-[#696969]" />
                        </div>
                    </div>
                    <StatusBar />
                </div>
                <HistoryPanel />
                <ColorPanel />
                <LayersPanel />
                <GuideDialog />
            </div>
            <TaskBar />
            <ImeBar />
        </div>
    );
}

export default App;
